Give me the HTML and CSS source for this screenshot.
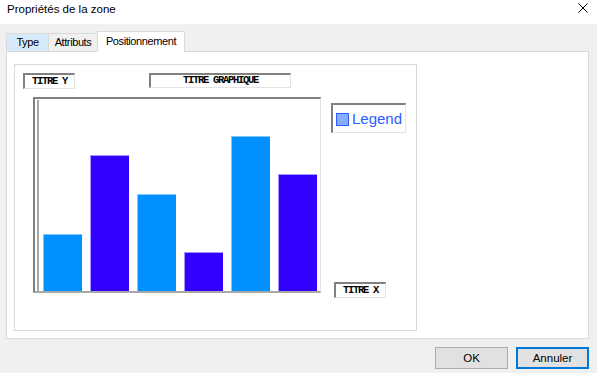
FILE: index.html
```html
<!DOCTYPE html>
<html lang="fr">
<head>
<meta charset="utf-8">
<title>Propriétés de la zone</title>
<link rel="stylesheet" href="styles.css">
</head>
<body>
<div class="window">
  <div class="titlebar">
    <span class="title">Propriétés de la zone</span>
    <svg class="close" width="10" height="10" viewBox="0 0 10 10"><path d="M0.5 0.5 L9.5 9.5 M9.5 0.5 L0.5 9.5" stroke="#000" stroke-width="1" fill="none"/></svg>
  </div>
  <div class="content">
    <div class="tabs">
      <div class="tab tab-type">Type</div>
      <div class="tab tab-attr">Attributs</div>
      <div class="tab tab-active">Positionnement</div>
    </div>
    <div class="panel">
      <div class="canvas">
        <div class="label label-y">TITRE Y</div>
        <div class="label label-title">TITRE GRAPHIQUE</div>
        <div class="plot">
          <div class="plot-inner">
            <div class="bar bar-light" style="height:57px"></div>
            <div class="bar bar-dark" style="height:136px"></div>
            <div class="bar bar-light" style="height:97px"></div>
            <div class="bar bar-dark" style="height:39px"></div>
            <div class="bar bar-light" style="height:155px"></div>
            <div class="bar bar-dark" style="height:117px"></div>
          </div>
        </div>
        <div class="legend"><span class="legend-swatch"></span><span class="legend-text">Legend</span></div>
        <div class="label label-x">TITRE X</div>
      </div>
    </div>
    <div class="buttons">
      <button class="btn">OK</button>
      <button class="btn btn-default">Annuler</button>
    </div>
  </div>
</div>
</body>
</html>
```
FILE: styles.css
```css
html, body {
  margin: 0;
  padding: 0;
}
body {
  width: 597px;
  height: 373px;
  overflow: hidden;
  background: #f0f0f0;
  font-family: "Liberation Sans", Arial, sans-serif;
  color: #000;
}
.window {
  display: flex;
  flex-direction: column;
  height: 373px;
}
.titlebar {
  height: 24px;
  background: #fff;
  display: flex;
  align-items: center;
  justify-content: space-between;
  padding: 0 9px 0 7px;
  box-sizing: border-box;
}
.title {
  font-size: 11.5px;
  position: relative;
  top: -3px;
}
.close {
  position: relative;
  top: -4px;
}
.content {
  padding: 7px 8px 0 6px;
  display: flex;
  flex-direction: column;
}
.tabs {
  display: flex;
  align-items: flex-end;
  height: 20px;
  position: relative;
  z-index: 2;
}
.tab {
  height: 18px;
  box-sizing: border-box;
  border: 1px solid #d9d9d9;
  border-bottom: none;
  font-size: 11px;
  letter-spacing: -0.4px;
  padding-top: 2px;
  text-align: center;
  background: #f0f0f0;
  margin-right: -1px;
  white-space: nowrap;
}
.tab-type {
  background: #d8eaf9;
  width: 43px;
}
.tab-attr {
  width: 50px;
}
.tab.tab-active {
  background: #fff;
  height: 21px;
  width: 88px;
  padding-top: 3px;
  margin-bottom: -1px;
}
.panel {
  height: 288px;
  box-sizing: border-box;
  background: #fff;
  border: 1px solid #d9d9d9;
  padding: 12px 0 0 7px;
}
.canvas {
  position: relative;
  width: 403px;
  height: 267px;
  box-sizing: border-box;
  border: 1px solid #d9d9d9;
}
.label {
  position: absolute;
  box-sizing: border-box;
  height: 16px;
  border-top: 2px solid #808080;
  border-left: 2px solid #808080;
  border-right: 1px solid #e3e3e3;
  border-bottom: 1px solid #e3e3e3;
  background: #fff;
  font-family: "Liberation Mono", "Courier New", monospace;
  font-weight: bold;
  font-size: 10.5px;
  letter-spacing: -1.3px;
  line-height: 12px;
  white-space: nowrap;
}
.label-y {
  left: 8px;
  top: 8px;
  width: 52px;
  padding-left: 7px;
}
.label-title {
  left: 134px;
  top: 8px;
  width: 142px;
  height: 15px;
  line-height: 11px;
  text-align: center;
}
.label-x {
  left: 319px;
  top: 217px;
  width: 52px;
  padding-left: 7px;
}
.plot {
  position: absolute;
  left: 18px;
  top: 32px;
  width: 288px;
  height: 196px;
  box-sizing: border-box;
  border-top: 2px solid #808080;
  border-left: 2px solid #808080;
  border-right: 1px solid #e3e3e3;
  border-bottom: 2px solid #a8a8a8;
  padding: 1px 0 0 2px;
}
.plot-inner {
  height: 100%;
  box-sizing: border-box;
  border-left: 2px solid #a8a8a8;
  display: flex;
  align-items: flex-end;
  gap: 8px;
  padding-left: 4px;
}
.bar {
  width: 39px;
  box-sizing: border-box;
}
.bar-light {
  background: #0091ff;
  border-top: 1px solid #7fc6ff;
  border-left: 1px solid #7fc6ff;
}
.bar-dark {
  background: #3300ff;
  border-top: 1px solid #a595ff;
  border-left: 1px solid #a595ff;
}
.legend {
  position: absolute;
  left: 316px;
  top: 38px;
  width: 75px;
  height: 30px;
  box-sizing: border-box;
  border-top: 2px solid #808080;
  border-left: 2px solid #808080;
  border-right: 1px solid #e3e3e3;
  border-bottom: 1px solid #e3e3e3;
  background: #fff;
  display: flex;
  align-items: center;
  padding-left: 3px;
  gap: 3px;
}
.legend-swatch {
  width: 13px;
  height: 13px;
  box-sizing: border-box;
  background: #88acff;
  border: 1px solid #2f5cff;
  margin-top: 1px;
}
.legend-text {
  font-family: "Liberation Sans", Arial, sans-serif;
  font-size: 15px;
  color: #2a5cff;
}
.buttons {
  display: flex;
  justify-content: flex-end;
  gap: 8px;
  margin-top: 8px;
}
.btn {
  width: 73px;
  height: 22px;
  box-sizing: border-box;
  background: #e1e1e1;
  border: 1px solid #adadad;
  font-family: "Liberation Sans", Arial, sans-serif;
  font-size: 11.5px;
  color: #000;
  padding: 0;
  margin: 0;
}
.btn-default {
  border: 2px solid #0078d7;
}
```
